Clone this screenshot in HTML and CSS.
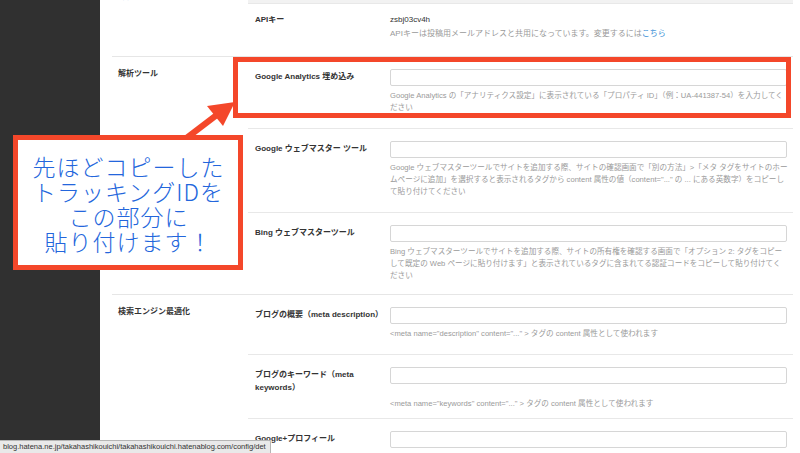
FILE: index.html
```html
<!DOCTYPE html>
<html lang="ja">
<head>
<meta charset="utf-8">
<title>設定 詳細</title>
<link rel="stylesheet" href="styles.css">
</head>
<body>
<div class="app">
  <aside class="sidebar"></aside>
  <main class="main">
    <section class="section section-partial">
      <div class="cat"><a class="cat-link">詳細</a></div>
      <div class="rows">
        <div class="gray-strip"></div>
        <div class="row row-api">
          <div class="label">APIキー</div>
          <div class="value">zsbj03cv4h</div>
          <div class="help help-api">APIキーは投稿用メールアドレスと共用になっています。変更するには<a class="link">こちら</a></div>
        </div>
      </div>
    </section>

    <section class="section">
      <div class="cat">解析ツール</div>
      <div class="rows">
        <div class="row">
          <div class="label">Google Analytics 埋め込み</div>
          <div class="input"></div>
          <div class="help">
            <span class="line">Google Analytics の「アナリティクス設定」に表示されている「プロパティ ID」（例：UA-441387-54）を入力してく</span>
            <span class="line">ださい</span>
          </div>
        </div>
        <div class="row">
          <div class="label">Google ウェブマスター ツール</div>
          <div class="input"></div>
          <div class="help">
            <span class="line">Google ウェブマスターツールでサイトを追加する際、サイトの確認画面で「別の方法」&gt;「メタ タグをサイトのホー</span>
            <span class="line">ムページに追加」を選択すると表示されるタグから content 属性の値（content="..." の ... にある英数字）をコピーし</span>
            <span class="line">て貼り付けてください</span>
          </div>
        </div>
        <div class="row row-last">
          <div class="label">Bing ウェブマスターツール</div>
          <div class="input"></div>
          <div class="help">
            <span class="line">Bing ウェブマスターツールでサイトを追加する際、サイトの所有権を確認する画面で「オプション 2: タグをコピー</span>
            <span class="line">して既定の Web ページに貼り付けます」と表示されているタグに含まれてる認証コードをコピーして貼り付けてく</span>
            <span class="line">ださい</span>
          </div>
        </div>
      </div>
    </section>

    <section class="section">
      <div class="cat">検索エンジン最適化</div>
      <div class="rows">
        <div class="row row-desc">
          <div class="label">ブログの概要（meta description）</div>
          <div class="input"></div>
          <div class="help">&lt;meta name="description" content="..." &gt; タグの content 属性として使われます</div>
        </div>
        <div class="row row-keywords">
          <div class="label">ブログのキーワード（meta keywords）</div>
          <div class="input"></div>
          <div class="help">&lt;meta name="keywords" content="..." &gt; タグの content 属性として使われます</div>
        </div>
        <div class="row">
          <div class="label">Google+プロフィール</div>
          <div class="input"></div>
          <div class="help">例：https://plus.google.com/108450780804507800001</div>
        </div>
      </div>
    </section>
  </main>
</div>

<div class="highlight"></div>

<svg class="arrow" width="800" height="453" viewBox="0 0 800 453">
  <line x1="176" y1="146" x2="218" y2="114" stroke="#f4472a" stroke-width="6"/>
  <polygon points="207,106 235,102 223,126" fill="#f4472a"/>
</svg>

<div class="callout">
  <div class="callout-line">先ほどコピーした</div>
  <div class="callout-line">トラッキングIDを</div>
  <div class="callout-line">この部分に</div>
  <div class="callout-line">貼り付けます！</div>
</div>

<div class="statusbar">blog.hatena.ne.jp/takahashikouichi/takahashikouichi.hatenablog.com/config/det</div>
</body>
</html>
```

FILE: styles.css
```css
html, body {
  margin: 0;
  padding: 0;
}

body {
  position: relative;
  width: 800px;
  height: 453px;
  overflow: hidden;
  background: #ffffff;
  font-family: "Liberation Sans", "Noto Sans CJK JP", sans-serif;
  color: #333333;
}

.app {
  display: flex;
  height: 453px;
  overflow: hidden;
}

.sidebar {
  flex: none;
  width: 100px;
  background: #303030;
}

.main {
  flex: 1;
  padding: 0 10px 0 12px;
}

.section {
  display: flex;
  border-top: 1px solid #e6e6e6;
}

.section-partial {
  border-top: none;
}

.cat {
  flex: none;
  width: 130px;
  padding: 11px 0 0 6px;
  font-size: 8px;
  line-height: 12px;
  font-weight: bold;
  color: #333333;
}

.section-partial .cat {
  padding-top: 0;
}

.cat-link {
  display: block;
  margin-top: -9px;
  color: #8ec5ea;
  font-weight: normal;
}

.rows {
  flex: 1;
}

.gray-strip {
  height: 3px;
  background: #f2f2f2;
}

.row {
  display: grid;
  grid-template-columns: 135px 1fr;
  row-gap: 4px;
  padding: 12px 6px 14px 7px;
  border-top: 1px solid #e8e8e8;
}

.row:first-child {
  border-top: none;
}

.row-api {
  padding: 10px 6px 16px 7px;
  row-gap: 2px;
}

.row-last {
  padding-bottom: 12px;
}

.row-desc {
  padding-bottom: 14px;
}

.row-keywords {
  padding-bottom: 8px;
}

.label {
  font-size: 8px;
  line-height: 13px;
  font-weight: bold;
  color: #333333;
  padding-top: 1px;
  padding-right: 8px;
}

.row-api .label {
  padding-top: 0;
  line-height: 12px;
}

.value {
  font-size: 8px;
  line-height: 12px;
  color: #333333;
}

.input {
  height: 17px;
  box-sizing: border-box;
  border: 1px solid #d6d6d6;
  border-radius: 2px;
  background: #ffffff;
}

.help {
  grid-column: 2;
  font-size: 7.6px;
  line-height: 12px;
  color: #9a9a9a;
}

.help-api {
  font-size: 8px;
}

.line {
  display: block;
  white-space: nowrap;
}

.link {
  color: #3a8fd6;
}

.highlight {
  position: absolute;
  left: 233px;
  top: 57px;
  width: 558px;
  height: 61px;
  box-sizing: border-box;
  border: 5px solid #f4472a;
}

.arrow {
  position: absolute;
  left: 0;
  top: 0;
}

.callout {
  position: absolute;
  left: 13px;
  top: 135px;
  width: 230px;
  height: 135px;
  box-sizing: border-box;
  border: 5px solid #f4472a;
  background: #ffffff;
  padding-top: 14px;
  text-align: center;
  font-family: "Noto Sans CJK JP", sans-serif;
  font-weight: 200;
  font-size: 23px;
  letter-spacing: 1px;
  line-height: 25px;
  color: #2366dc;
}

.callout-line {
  white-space: nowrap;
  height: 25px;
  padding-left: 1px;
}

.statusbar {
  position: absolute;
  left: 0;
  bottom: 0;
  height: 12px;
  padding: 0 4px 0 3px;
  background: #e9e9e9;
  border-top: 1px solid #b5b5b5;
  border-right: 1px solid #b5b5b5;
  border-top-right-radius: 2px;
  font-size: 7.5px;
  line-height: 12px;
  color: #333333;
  white-space: nowrap;
}
```
